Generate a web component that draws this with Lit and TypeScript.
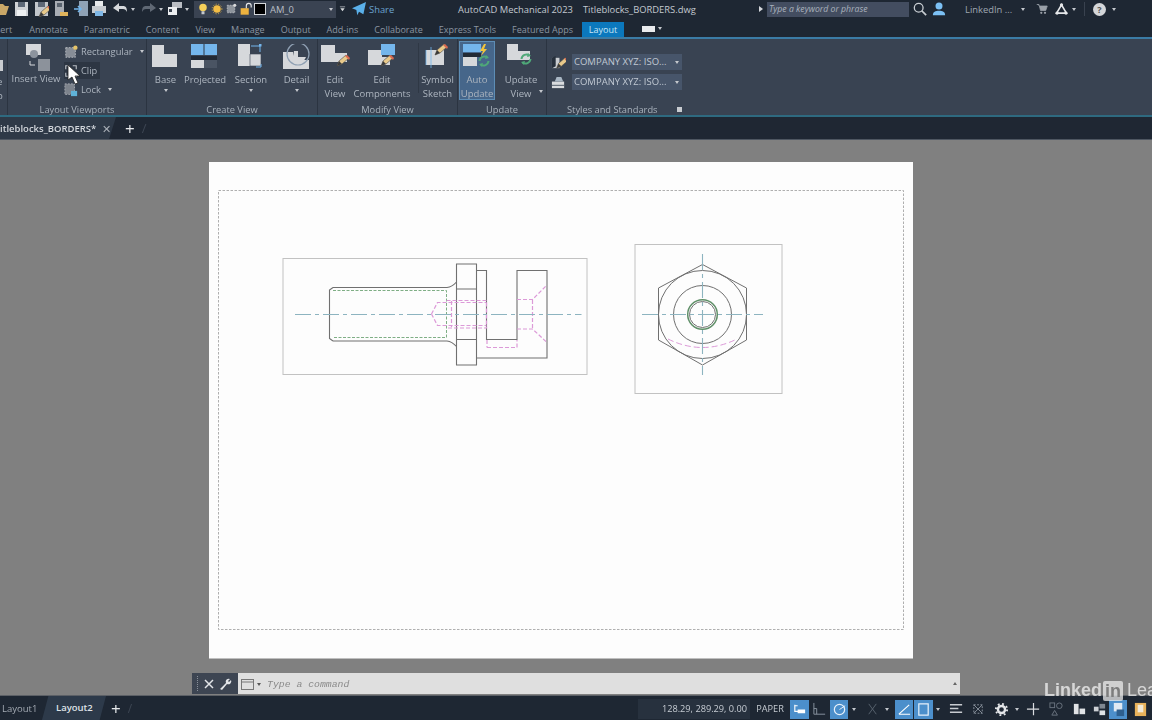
import { LitElement, css, html, svg, nothing } from "lit";
import { customElement } from "lit/decorators.js";

const GREY = "#d6d8db";
const BLUE = "#74b6ec";
const GREEN = "#4fa878";

const pencil = (x: number, y: number) => svg`
  <g transform="translate(${x} ${y})">
    <path d="M0 11l2-5 7-6 3 3-7 6z" fill="#e8c98a" stroke="#4a4a4a" stroke-width=".6" />
    <path d="M8 1l2-1 3 3-1 2z" fill="#d9694f" />
    <path d="M0 11l2-5 3 3z" fill="#3a3a3a" />
  </g>`;

const arrows = (x: number, y: number) => svg`
  <g transform="translate(${x} ${y})" fill="none" stroke="${GREEN}" stroke-width="2">
    <path d="M1.5 6a5 5 0 0 1 8-3.5" />
    <path d="M10.500 6a5 5 0 0 1-8 3.500" />
    <path d="M8 0l3 3-4 1z" fill="${GREEN}" stroke="none" />
    <path d="M4 12l-3-3 4-1z" fill="${GREEN}" stroke="none" />
  </g>`;

const lShape = svg`<path d="M1 1h12v9h13v13H1z" fill="${GREY}" />`;

const bigIcons: Record<string, unknown> = {
  base: lShape,
  projected: svg`
    <rect x="1" y="0" width="26" height="11" fill="${BLUE}" />
    <path d="M14 0v11" stroke="#2e3846" />
    <rect x="1" y="12" width="26" height="4" fill="#222a35" />
    <path d="M1 16h13v8H1z" fill="${GREY}" />
    <rect x="14" y="16" width="13" height="8" fill="#4a5463" />`,
  section: svg`
    <path d="M2 0h12v22H2z" fill="${GREY}" />
    <path d="M14 10h11v12H14z" fill="${GREY}" stroke="#3a4454" stroke-width=".6" />
    <path d="M15 2h9v6" fill="none" stroke="${BLUE}" stroke-width="1" />
    <rect x="23" y="0" width="2.500" height="2.500" fill="${BLUE}" />
    <path d="M20 23h5v-3" fill="none" stroke="${BLUE}" stroke-width="1" />`,
  detail: svg`
    <path d="M1 8h10v8h16v9H1z" fill="${GREY}" />
    <circle cx="16" cy="10" r="11" fill="none" stroke="#8fa0b3" stroke-width="1.200" />
    <path d="M12 7h4v6h8a9 9 0 0 1-14 4z" fill="${GREY}" />`,
  editView: svg`<path d="M1 1h14v8h12v9H1z" fill="${GREY}" />${pencil(17, 11)}`,
  editComponents: svg`
    <path d="M1 6h14v7h8v8H1z" fill="${GREY}" />
    <rect x="14" y="0" width="14" height="11" fill="${BLUE}" />${pencil(14, 11)}`,
  symbol: svg`
    <rect x="3" y="6" width="18" height="15" fill="${GREY}" />
    <path d="M8 3v21M3 6v15" stroke="${BLUE}" stroke-width=".8" />
    ${pencil(12, 0)}`,
  autoUpdate: svg`
    <rect x="1" y="0" width="18" height="8" fill="${BLUE}" />
    <rect x="1" y="9" width="18" height="4" fill="#222a35" />
    <rect x="1" y="13" width="14" height="9" fill="${GREY}" />
    <path d="M22 0l-4 7h3l-2 5 6-7h-3l2-5z" fill="#f2c53d" />
    ${arrows(16, 11)}`,
  updateView: svg`
    <path d="M1 0h11v7h12v9H1z" fill="${GREY}" />
    ${arrows(14, 9)}`,
};

const insertIcon = svg`
  <rect x="5" y="0" width="15" height="11" fill="${GREY}" />
  <circle cx="13" cy="10" r="4" fill="#8d949e" />
  <path d="M9 17v4h5" fill="none" stroke="${GREY}" />
  <rect x="17" y="15" width="12" height="12" fill="#8c929b" />`;

// small toolbar glyphs, 16 box
const tinyIcons: Record<string, unknown> = {
  save: svg`<rect x="2" y="1" width="13" height="14" fill="#cfd2d6" /><rect x="5" y="1" width="7" height="5" fill="#5d6877" /><rect x="4" y="9" width="9" height="6" fill="#eef0f2" />`,
  saveAs: svg`<rect x="2" y="1" width="13" height="14" fill="#c2c6cb" /><rect x="5" y="1" width="7" height="5" fill="#5d6877" />${pencil(6, 5)}`,
  cloud: svg`<rect x="3" y="0" width="9" height="15" fill="#a8adb4" /><rect x="5" y="2" width="5" height="4" fill="#59636f" /><path d="M8 11h8v4H8z" fill="#e0b45c" />`,
  publish: svg`<rect x="6" y="0" width="9" height="15" fill="#8fa2b6" /><path d="M1 8h7M5 5l3 3-3 3" stroke="${BLUE}" stroke-width="1.600" fill="none" />`,
  print: svg`<rect x="4" y="0" width="8" height="5" fill="#e7e9eb" /><rect x="1" y="5" width="14" height="7" fill="#c6cacf" /><rect x="4" y="10" width="8" height="5" fill="#7fb7e6" />`,
  undo: svg`<path d="M1 7l6-5v3h4c3 0 4 2 4 6-1-2-2-3-4-3H7v3z" fill="#d5d8db" />`,
  redo: svg`<path d="M15 7l-6-5v3H5C2 5 1 7 1 11c1-2 2-3 4-3h4v3z" fill="#5f6874" />`,
  workspace: svg`<rect x="5" y="1" width="10" height="6" fill="#b9bdc3" /><rect x="1" y="6" width="9" height="8" fill="#eceef0" /><rect x="2" y="8" width="3" height="3" fill="#39424f" />`,
  bulb: svg`<circle cx="8" cy="6" r="5" fill="#f4cf5a" /><rect x="6" y="11" width="4" height="4" fill="#c4c7cb" />`,
  sun: svg`<circle cx="8" cy="8" r="5" fill="#f3bd45" /><circle cx="8" cy="8" r="6.500" fill="none" stroke="#f3bd45" stroke-dasharray="1.500 2" />`,
  layerGrid: svg`<rect x="3" y="3" width="10" height="10" fill="#8e949c" stroke="#c3c6ca" stroke-dasharray="2 1.500" /><circle cx="13" cy="3" r="2" fill="#d9dadc" />`,
  lock: svg`<rect x="2" y="7" width="10" height="8" fill="#eeb33f" /><path d="M9 7V4a3 3 0 0 1 6 0v2" fill="none" stroke="#e8e8e8" stroke-width="1.400" />`,
  layerMore: svg`<path d="M2 3h12" stroke="#d5d8db" stroke-width="1.500" /><path d="M3 6h10l-5 7z" fill="#d5d8db" />`,
  share: svg`<path d="M0 7l16-7-3 14-5-3-2 4-1-6z" fill="#5ab0ea" />`,
  search: svg`<circle cx="6.500" cy="6.500" r="5" fill="none" stroke="#c8cdd2" stroke-width="1.500" /><path d="M10 10l5 5" stroke="#c8cdd2" stroke-width="2" />`,
  person: svg`<circle cx="8" cy="4.500" r="4" fill="#7cc0f4" /><path d="M1 15c0-4 3-5 7-5s7 1 7 5z" fill="#7cc0f4" />`,
  cart: svg`<path d="M1 2h3l2 8h7l2-6H5" fill="#9aa0a8" stroke="#9aa0a8" /><circle cx="7" cy="13" r="1.500" fill="#9aa0a8" /><circle cx="12" cy="13" r="1.500" fill="#9aa0a8" />`,
  tri: svg`<path d="M8 3L2 13h12z" fill="none" stroke="#e6e8ea" stroke-width="2" /><circle cx="8" cy="3" r="2" fill="#e6e8ea" /><circle cx="2.500" cy="13" r="2" fill="#e6e8ea" /><circle cx="13.500" cy="13" r="2" fill="#e6e8ea" />`,
  rectangular: svg`<rect x="2" y="3" width="11" height="11" fill="#878d96" stroke="#b9bdc2" stroke-dasharray="2 1.500" /><circle cx="13" cy="3" r="2.500" fill="#e6c468" />`,
  clip: svg`<path d="M2 6V2h4M10 2h4v4M2 10v4h4M10 14h4v-4" fill="none" stroke="#b8bdc3" stroke-width="1.300" />`,
  lockVp: svg`<rect x="1" y="1" width="11" height="12" fill="#7d838c" stroke="#a9adb3" stroke-dasharray="2 1.500" /><rect x="8" y="9" width="7" height="6" fill="#5fb2d8" />`,
  style1: svg`<rect x="1" y="3" width="8" height="11" fill="#c9ccd0" /><path d="M1 3l4-2v11l-4 2z" fill="#27303c" />${pencil(6, 3)}`,
  style2: svg`<rect x="1" y="7" width="13" height="7" fill="#d9dbde" /><path d="M4 7l2-5h5l2 5z" fill="#a9b7c4" /><path d="M1 11h13" stroke="#4b5564" />`,
};

// status bar glyphs
const statusIcons: Record<string, unknown> = {
  model: svg`<path d="M3 3v7h9M3 4h3" stroke="#fff" fill="none" stroke-width="1.200" /><rect x="6" y="8" width="8" height="4" fill="#fff" />`,
  ortho: svg`<path d="M2 1v12h12" stroke="#8b95a1" fill="none" /><path d="M2 7h3v6" stroke="#8b95a1" fill="none" />`,
  polar: svg`<circle cx="8" cy="8" r="5.500" fill="none" stroke="#e6f0fa" stroke-width="1.300" /><path d="M8 8l6-4" stroke="#e6f0fa" />`,
  snap: svg`<path d="M4 2l8 11M12 2L4 13" stroke="#59636f" />`,
  line: svg`<path d="M2 13L13 3M2 13h12" stroke="#fff" stroke-width="1.200" />`,
  box: svg`<rect x="3" y="2" width="10" height="12" fill="none" stroke="#e9f2fb" stroke-width="1.300" />`,
  lines: svg`<path d="M1 3h13M1 7h9M1 11h13" stroke="#c8ccd1" stroke-width="1.500" />`,
  select: svg`<rect x="3" y="3" width="9" height="9" fill="none" stroke="#8a929d" stroke-dasharray="2 1.500" /><path d="M3 3l9 9M12 3l-9 9" stroke="#8a929d" />`,
  gear: svg`<circle cx="8" cy="8" r="3.800" fill="none" stroke="#e3e5e8" stroke-width="2.600" /><circle cx="8" cy="8" r="6" fill="none" stroke="#e3e5e8" stroke-width="2" stroke-dasharray="2 2.700" />`,
  plus: svg`<path d="M8 1v13M1 7.500h13" stroke="#d9dcdf" stroke-width="1.300" />`,
  shapes: svg`<rect x="1" y="1" width="5" height="5" fill="none" stroke="#6b7480" /><circle cx="11" cy="4" r="3" fill="none" stroke="#6b7480" /><path d="M3 14l3-5 3 5z" fill="none" stroke="#6b7480" />`,
  blocks: svg`<rect x="2" y="2" width="5" height="11" fill="#e0e2e5" /><rect x="8" y="7" width="6" height="6" fill="#e0e2e5" />`,
  blocks2: svg`<rect x="2" y="5" width="5" height="5" fill="#cdd0d4" /><rect x="8" y="2" width="6" height="5" fill="#7f8791" /><rect x="8" y="9" width="6" height="5" fill="#e0e2e5" />`,
  lockB: svg`<rect x="3" y="1" width="9" height="9" fill="#dfe9f3" /><rect x="6" y="8" width="8" height="7" fill="#2e5f8e" />`,
  book: svg`<rect x="2" y="1" width="12" height="14" fill="#e8b25a" /><rect x="5" y="3" width="6" height="8" fill="#f2ead8" />`,
};

const statusItems: [string, number, boolean][] = [
  ["model", 19, true], ["sp", 3, false], ["ortho", 15, false], ["sp", 3, false], ["polar", 18, true],
  ["dot", 12, false], ["sp", 4, false], ["snap", 16, false], ["dot", 14, false], ["sp", 1, false], ["line", 18, true],
  ["sp", 1, false], ["box", 19, true], ["dot", 10, false], ["sp", 4, false], ["lines", 18, false], ["sp", 6, false],
  ["select", 15, false], ["sp", 8, false], ["gear", 15, false], ["dot", 16, false], ["sp", 1, false], ["plus", 15, false],
  ["sp", 7, false], ["shapes", 16, false], ["sp", 8, false], ["blocks", 14, false], ["sp", 6, false],
  ["blocks2", 14, false], ["sp", 3, false], ["lockB", 18, true], ["sp", 5, false], ["book", 16, false],
];

const ribbonTabs = ["Annotate", "Parametric", "Content", "View", "Manage", "Output", "Add-ins", "Collaborate", "Express Tools", "Featured Apps"];

type Big = { key: string; label: string[]; w: number; caret?: boolean; active?: boolean; side?: boolean };

const createView: Big[] = [
  { key: "base", label: ["Base"], w: 37, caret: true },
  { key: "projected", label: ["Projected"], w: 42 },
  { key: "section", label: ["Section"], w: 50, caret: true },
  { key: "detail", label: ["Detail"], w: 41, caret: true },
];
const modifyView: Big[] = [
  { key: "editView", label: ["Edit", "View"], w: 34 },
  { key: "editComponents", label: ["Edit", "Components"], w: 60 },
];

@customElement("app-root")
export class AppRoot extends LitElement {
  static styles = css`
    :host {
      display: block;
      width: 1152px;
      height: 720px;
      overflow: hidden;
      position: relative;
      font-family: "Open Sans", "Liberation Sans", sans-serif;
      background: #808080;
    }
    .app {
      width: 1152px;
      height: 720px;
      display: flex;
      flex-direction: column;
      filter: blur(0.35px);
    }
    svg { display: block; flex: none; }

    .titlebar {
      height: 20px;
      padding-bottom: 2px;
      box-sizing: border-box;
      background: #1e2733;
      display: flex;
      align-items: center;
      flex: none;
      position: relative;
      color: #c6ccd3;
      font-size: 9.400px;
    }
    .sp { flex: none; }
    .dot {
      flex: none;
      width: 0;
      height: 0;
      border-left: 2px solid transparent;
      border-right: 2px solid transparent;
      border-top: 3px solid #c4c8cd;
    }
    .layerbar {
      flex: none;
      width: 142px;
      height: 17px;
      background: #3a4352;
      display: flex;
      align-items: center;
      gap: 2px;
      padding-left: 3px;
      box-sizing: border-box;
      margin-left: 5px;
    }
    .swatch { width: 12px; height: 12px; background: #000; border: 1px solid #d5d8db; box-sizing: border-box; }
    .layername { color: #b9bfc7; flex: 1; margin-left: 2px; }
    .caretbox { margin-right: 3px; }
    .share { color: #6aa3cf; margin-left: 3px; width: 89px; }
    .apptitle { color: #c3c9d0; white-space: nowrap; width: 301px; display: flex; gap: 10px; }
    .arrowr { width: 0; height: 0; border-top: 3px solid transparent; border-bottom: 3px solid transparent; border-left: 4px solid #d4d7db; flex: none; margin-right: 4px; }
    .search {
      flex: none;
      width: 142px;
      height: 15px;
      background: #434d60;
      color: #aab2bd;
      font-style: italic;
      font-size: 8.700px;
      line-height: 15px;
      padding-left: 2px;
      box-sizing: border-box;
      margin-right: 4px;
    }
    .user { color: #9ea6b0; width: 50px; margin-left: 19px; white-space: nowrap; }
    .vsep { width: 1px; height: 14px; background: #39424f; margin: 0 8px; flex: none; }
    .help {
      width: 13px;
      height: 13px;
      border-radius: 50%;
      background: #d4d6d9;
      color: #555;
      font-size: 9px;
      font-weight: 700;
      text-align: center;
      line-height: 13px;
      flex: none;
      margin-right: 6px;
    }

    .tabs {
      height: 19px;
      box-sizing: border-box;
      background: #1e2733;
      flex: none;
      display: flex;
      align-items: stretch;
      font-size: 9px;
      color: #8b95a1;
      border-bottom: 2px solid #3b7ca6;
      line-height: 20px;
      overflow: hidden;
      white-space: nowrap;
    }
    .tab { margin-right: 16px; }
    .tab.cut { margin-left: -4px; margin-right: 17px; }
    .tab.active {
      background: #0b78bd;
      color: #c9e6f7;
      width: 42px;
      margin: 2px 18px 0 -7px;
      line-height: 16px;
      text-align: center;
    }
    .wsicon { width: 13px; height: 6px; background: #e9ebee; align-self: center; margin-right: 3px; }

    .ribbon {
      height: 78px;
      box-sizing: border-box;
      background: #394352;
      flex: none;
      display: flex;
      border-bottom: 2px solid #2e6a80;
      color: #adb5bf;
      font-size: 9.500px;
    }
    .panel {
      flex: none;
      display: flex;
      flex-direction: column;
      border-right: 1px solid #2b3441;
      box-sizing: border-box;
      position: relative;
    }
    .panel .body { flex: 1; display: flex; min-height: 0; align-items: flex-start; }
    .panel .title {
      height: 12px;
      line-height: 14px;
      text-align: center;
      color: #a9b2bc;
      font-size: 9.300px;
      white-space: nowrap;
    }
    .p0 { width: 8px; overflow: hidden; }
    .p0 .body { flex-direction: column; }
    .stub { width: 3px; height: 11px; background: #c9ccd0; margin-top: 21px; }
    .frag { margin: 5px 0 0 -3px; line-height: 12px; }
    .p1 { width: 139px; }
    .p2 { width: 171px; }
    .p3 { width: 140px; }
    .p4 { width: 89px; }
    .p5 { width: 144px; border-right: none; }

    .big {
      flex: none;
      display: flex;
      flex-direction: column;
      align-items: center;
      box-sizing: border-box;
      padding-top: 5px;
      line-height: 13px;
      text-align: center;
      white-space: nowrap;
      position: relative;
    }
    .big svg { margin-bottom: 4px; }
    .big.two { line-height: 14px; }
    .big.two svg { margin-bottom: 4px; }
    .big.active {
      background: #46668a;
      border: 1px solid #5d8db5;
      height: 59px;
      margin-top: 2px;
      padding-top: 2px;
      margin-left: 1px;
    }
    .caret { margin-top: 3px; }
    .sidecaret { position: absolute; right: 0; bottom: 8px; }
    .sepline { width: 1px; height: 50px; margin: 4px 0 0 6px; background: #2f3845; flex: none; }

    .insert { width: 56px; margin-left: 0; }
    .insert svg { margin-bottom: 0; margin-top: 0; }
    .smalls { display: flex; flex-direction: column; align-items: flex-start; padding-top: 4px; gap: 2px; }
    .small {
      height: 17px;
      display: flex;
      align-items: center;
      gap: 3px;
      padding-right: 2px;
      white-space: nowrap;
      font-size: 9.300px;
    }
    .small.hot { background: #2d3643; padding-right: 3px; }
    .small .dot { margin-left: 4px; }

    .combos { display: grid; grid-template-columns: 15px 110px; gap: 4px 6px; padding: 15px 0 0 4px; align-items: center; align-content: start; }
    .combo {
      height: 16px;
      background: #47556a;
      color: #c0c8d2;
      font-size: 9.500px;
      line-height: 16px;
      padding-left: 2px;
      display: flex;
      justify-content: space-between;
      align-items: center;
      padding-right: 3px;
      box-sizing: border-box;
      white-space: nowrap;
    }
    .expander { position: absolute; right: 9px; bottom: 3px; width: 5px; height: 5px; background: #c8ccd1; }
    .p5 .title { text-align: left; padding-left: 20px; }

    .doctabs {
      height: 23px;
      flex: none;
      background: #1f2733;
      display: flex;
      align-items: center;
      color: #d3d7dc;
      font-size: 9.500px;
      border-bottom: 1px solid #4e5661;
      box-sizing: border-box;
    }
    .doctab {
      width: 116px;
      height: 22px;
      background: #2e3947;
      clip-path: polygon(0 0, 100% 0, 94% 100%, 0 100%);
      display: flex;
      align-items: center;
      font-weight: 600;
      white-space: nowrap;
      overflow: hidden;
    }
    .doctab span:first-child { width: 102px; }
    .close { color: #aab0b8; font-size: 11px; font-weight: 400; }
    .plusbtn { color: #e8eaec; font-size: 17px; font-weight: 400; margin-left: 9px; line-height: 1; }
    .slash { color: #3d4653; font-size: 13px; margin-left: 7px; }

    .canvas { flex: 1; background: #808080; position: relative; border-bottom: 1px solid #5c6066; }
    .drawing { position: absolute; left: 0; top: 0; }

    .cmd {
      position: absolute;
      left: 192px;
      top: 533px;
      width: 768px;
      height: 21px;
      display: flex;
      background: #3d4552;
    }
    .cmdtools { width: 46px; flex: none; display: flex; align-items: center; gap: 5px; padding-left: 5px; box-sizing: border-box; }
    .grip { width: 1px; height: 15px; border-left: 1px dotted #8a9099; }
    .cmdinput {
      flex: 1;
      background: #dfdfdf;
      display: flex;
      align-items: center;
      font-family: "Liberation Mono", monospace;
      font-style: italic;
      font-size: 9.800px;
      color: #8a8a8a;
      padding: 2px 0 0 3px;
      gap: 3px;
      position: relative;
    }
    .uparrow { position: absolute; right: 3px; top: 9px; width: 0; height: 0; border-left: 2.500px solid transparent; border-right: 2.500px solid transparent; border-bottom: 3px solid #666; }

    .status {
      height: 24px;
      flex: none;
      background: #1e2733;
      display: flex;
      align-items: center;
      color: #bcc2c9;
      font-size: 9.500px;
    }
    .ltab { padding-left: 2px; width: 40px; color: #a3aab3; flex: none; }
    .ltab.on {
      width: 64px;
      height: 24px;
      line-height: 24px;
      padding-left: 14px;
      box-sizing: border-box;
      background: #2d3a4a;
      color: #dfe3e7;
      font-weight: 600;
      clip-path: polygon(10% 0, 100% 0, 90% 100%, 0 100%);
      margin-left: 0;
    }
    .lplus { color: #e8eaec; font-size: 17px; margin-left: 5px; line-height: 1; flex: none; }
    .lslash { color: #3d4653; margin-left: 7px; font-size: 12px; }
    .stretch { flex: 1; }
    .coords {
      width: 112px;
      height: 20px;
      margin-top: 2px;
      background: #27313e;
      color: #c6ccd3;
      line-height: 20px;
      text-align: right;
      padding-right: 3px;
      box-sizing: border-box;
      flex: none;
      font-size: 9.200px;
    }
    .paper { width: 40px; text-align: center; flex: none; height: 20px; margin-top: 2px; line-height: 20px; font-size: 9.200px; color: #c4cad0; }
    .sicon { flex: none; height: 19px; margin-top: 2px; display: flex; align-items: center; justify-content: center; }
    .sicon.on { background: #4c8fcb; }

    .watermark {
      position: absolute;
      left: 1044px;
      top: 680px;
      display: flex;
      align-items: center;
      font-family: "Liberation Sans", sans-serif;
      font-size: 18px;
      color: rgba(235, 235, 235, 0.8);
      white-space: nowrap;
    }
    .watermark b { font-weight: 700; }
    .inbox {
      background: rgba(235, 235, 235, 0.75);
      color: #7d7d7d;
      font-weight: 700;
      padding: 0 2px;
      margin: 0 4px 0 1px;
      border-radius: 2px;
      line-height: 20px;
    }
    .cursor { position: absolute; left: 67px; top: 64px; }
  `;

  private tiny(key: string, w = 16, h = 16) {
    return html`<svg width=${w} height=${h} viewBox="0 0 16 16">${tinyIcons[key]}</svg>`;
  }

  private gap(w: number) {
    return html`<span class="sp" style="width:${w}px"></span>`;
  }

  private renderTitle() {
    return html`<div class="titlebar">
      <svg width="9" height="14" viewBox="0 0 9 14"><path d="M-3 2h6l2 2h4L6 13H-3z" fill="#c9a767" /></svg>
      ${this.gap(4)}${this.tiny("save")}${this.gap(4)}${this.tiny("saveAs")}${this.gap(3)}
      ${this.tiny("cloud")}${this.gap(5)}${this.tiny("publish")}${this.gap(2)}${this.tiny("print")}${this.gap(5)}
      ${this.tiny("undo")}${this.gap(3)}<span class="dot"></span>${this.gap(6)}${this.tiny("redo")}${this.gap(2)}
      <span class="dot"></span>${this.gap(4)}${this.tiny("workspace")}${this.gap(2)}<span class="dot"></span>
      <div class="layerbar">
        ${this.tiny("bulb", 12, 14)}${this.tiny("sun", 12, 14)}${this.tiny("layerGrid", 12, 14)}${this.tiny("lock", 13, 14)}
        <span class="swatch"></span><span class="layername">AM_0</span>
        <span class="dot caretbox"></span>
      </div>
      ${this.gap(3)}${this.tiny("layerMore", 7, 8)}${this.gap(6)}${this.tiny("share", 14, 14)}
      <span class="share">Share</span>
      <div class="apptitle"><span>AutoCAD Mechanical 2023</span><span>Titleblocks_BORDERS.dwg</span></div>
      <span class="arrowr"></span>
      <div class="search">Type a keyword or phrase</div>
      ${this.tiny("search", 14, 14)}${this.gap(5)}${this.tiny("person", 14, 14)}
      <span class="user">LinkedIn ...</span>${this.gap(6)}<span class="dot"></span>${this.gap(11)}
      ${this.tiny("cart", 12, 14)}${this.gap(7)}${this.tiny("tri", 13, 14)}${this.gap(4)}<span class="dot"></span>
      <span class="vsep"></span><span class="help">?</span><span class="dot"></span>
    </div>`;
  }

  private renderTabs() {
    return html`<div class="tabs">
      <span class="tab cut">sert</span>
      ${ribbonTabs.map((t) => html`<span class="tab">${t}</span>`)}
      <span class="tab active">Layout</span>
      <span class="wsicon"></span><span class="dot" style="align-self:center"></span>
    </div>`;
  }

  private big(b: Big) {
    return html`<div class="big ${b.label.length > 1 ? "two" : ""} ${b.active ? "active" : ""}" style="width:${b.w}px">
      <svg width="30" height="25" viewBox="0 0 30 25">${bigIcons[b.key]}</svg>
      ${b.label.map((l) => html`<span>${l}</span>`)}
      ${b.caret ? html`<span class="dot caret"></span>` : nothing}
      ${b.side ? html`<span class="dot sidecaret"></span>` : nothing}
    </div>`;
  }

  private renderRibbon() {
    return html`<div class="ribbon">
      <div class="panel p0">
        <div class="body"><span class="stub"></span><span class="frag">e</span><span class="frag" style="margin-top:2px">p</span></div>
      </div>
      <div class="panel p1">
        <div class="body">
          <div class="big insert">
            <svg width="30" height="28" viewBox="0 0 30 28">${insertIcon}</svg>
            <span>Insert View</span>
          </div>
          <div class="smalls">
            <div class="small">${this.tiny("rectangular", 14, 14)}Rectangular<span class="dot"></span></div>
            <div class="small hot">${this.tiny("clip", 14, 14)}Clip</div>
            <div class="small">${this.tiny("lockVp", 14, 14)}Lock<span class="dot"></span></div>
          </div>
        </div>
        <div class="title">Layout Viewports</div>
      </div>
      <div class="panel p2">
        <div class="body">${createView.map((b) => this.big(b))}</div>
        <div class="title">Create View</div>
      </div>
      <div class="panel p3">
        <div class="body">
          ${modifyView.map((b) => this.big(b))}
          <span class="sepline"></span>
          ${this.big({ key: "symbol", label: ["Symbol", "Sketch"], w: 37 })}
        </div>
        <div class="title">Modify View</div>
      </div>
      <div class="panel p4">
        <div class="body">
          ${this.big({ key: "autoUpdate", label: ["Auto", "Update"], w: 36, active: true })}
          ${this.gap(4)}
          ${this.big({ key: "updateView", label: ["Update", "View"], w: 44, side: true })}
        </div>
        <div class="title">Update</div>
      </div>
      <div class="panel p5">
        <div class="body">
          <div class="combos">
            ${this.tiny("style1", 15, 15)}<div class="combo">COMPANY XYZ: ISO...<span class="dot"></span></div>
            ${this.tiny("style2", 15, 15)}<div class="combo">COMPANY XYZ: ISO...<span class="dot"></span></div>
          </div>
        </div>
        <div class="title">Styles and Standards</div>
        <span class="expander"></span>
      </div>
    </div>`;
  }

  // paper and the two viewports; drawn in page coordinates (viewBox starts at y 140)
  private renderDrawing() {
    const ln = "#707070";
    const pink = "#dc9ad8";
    const grn = "#7fae85";
    const ctr = "#8db4c0";
    return html`<svg class="drawing" width="1152" height="556" viewBox="0 140 1152 556">
      <rect x="209" y="162" width="704" height="496.500" fill="#fdfdfd" />
      <rect x="218.500" y="190.500" width="685" height="439" fill="none" stroke="#9a9a9a" stroke-width=".8" stroke-dasharray="2.500 1.500" />
      <rect x="283" y="258.500" width="304" height="116" fill="none" stroke="#c2c2c2" />
      <rect x="635" y="244.500" width="147" height="149" fill="none" stroke="#c2c2c2" />

      <g fill="none" stroke=${ln} stroke-width="1.100">
        <path d="M333 287.500H447Q452 287 456.500 282M333 341H447Q452 341.500 456.500 346.500" />
        <path d="M333 287.500L329.500 290V338.500L333 341" />
        <path d="M456.500 264H476.500V365H456.500ZM456.500 289H476.500M456.500 339.500H476.500" />
        <path d="M476.500 270.500H486.500V339.500H517V270.500H547V358H476.500" />
      </g>
      <g fill="none" stroke=${grn} stroke-width="1" stroke-dasharray="3 1.500">
        <path d="M333 290.500H446.500V337.500H333" />
      </g>
      <g fill="none" stroke=${pink} stroke-width="1.200" stroke-dasharray="4 2">
        <path d="M431.500 314L437.500 302.500H486.500M431.500 314L437.500 325.500H486.500" />
        <path d="M446.500 300.500H486.500V328H446.500M451.500 301V327" />
        <path d="M487 347.500H517V340M487 340V347.500" />
        <path d="M517 299.500H532.500L547 285M517 329H532.500L547 342.500M532.500 300V329" />
      </g>
      <path d="M295 314.500H581.500" stroke=${ctr} stroke-width="1.100" stroke-dasharray="16 4 4 4" fill="none" />

      <g fill="none" stroke=${ln} stroke-width="1">
        <path d="M702.500 264.500L746.500 288V340L702.500 365L658.500 340V288Z" />
        <circle cx="702.500" cy="314.500" r="44" />
        <circle cx="702.500" cy="314.500" r="29" />
        <circle cx="702.500" cy="314.500" r="13" />
      </g>
      <circle cx="702.500" cy="314.500" r="14.800" fill="none" stroke="#5f8f68" stroke-width="1.500" />
      <path d="M668 339Q702.500 356 737 339" fill="none" stroke=${pink} stroke-dasharray="6 3" />
      <path d="M642 314.500H763M702.500 254V375" fill="none" stroke=${ctr} stroke-width="1.100" stroke-dasharray="16 4 4 4" />
    </svg>`;
  }

  private renderCommand() {
    return html`<div class="cmd">
      <div class="cmdtools">
        <span class="grip"></span>
        <svg width="10" height="10" viewBox="0 0 10 10"><path d="M1 1l8 8M9 1L1 9" stroke="#e3e5e8" stroke-width="1.500" /></svg>
        <svg width="13" height="13" viewBox="0 0 13 13"><path d="M1 12l6-6a3 3 0 0 1 4-4L9 4l1 1 2-2a3 3 0 0 1-4 4l-5 6z" fill="#e3e5e8" /></svg>
      </div>
      <div class="cmdinput">
        <svg width="13" height="11" viewBox="0 0 13 11"><rect x=".5" y=".5" width="12" height="10" fill="none" stroke="#777" /><path d="M.5 3h12" stroke="#777" /></svg>
        <span class="dot" style="border-top-color:#555"></span>
        <span style="margin-left:3px">Type a command</span>
        <span class="uparrow"></span>
      </div>
    </div>`;
  }

  private renderStatus() {
    return html`<div class="status">
      <span class="ltab">Layout1</span>
      <span class="ltab on">Layout2</span>
      <span class="lplus">+</span>
      <span class="lslash">/</span>
      <span class="stretch"></span>
      <div class="coords">128.29, 289.29, 0.00</div>
      <span class="paper">PAPER</span>
      ${statusItems.map(([key, w, on]) => {
        if (key === "sp") return this.gap(w);
        if (key === "dot") return html`<span class="sicon" style="width:${w}px"><span class="dot"></span></span>`;
        return html`<span class="sicon ${on ? "on" : ""}" style="width:${w}px">
          <svg width="15" height="15" viewBox="0 0 16 16">${statusIcons[key]}</svg>
        </span>`;
      })}
      ${this.gap(4)}
    </div>`;
  }

  render() {
    return html`<div class="app">
      ${this.renderTitle()} ${this.renderTabs()} ${this.renderRibbon()}
      <div class="doctabs">
        <div class="doctab"><span>itleblocks_BORDERS*</span><span class="close">✕</span></div>
        <span class="plusbtn">+</span>
        <span class="slash">/</span>
      </div>
      <div class="canvas">${this.renderDrawing()} ${this.renderCommand()}</div>
      ${this.renderStatus()}
      <div class="watermark"><b>Linked</b><span class="inbox">in</span>Learning</div>
      <svg class="cursor" width="14" height="21" viewBox="0 0 14 21">
        <path d="M1 1v15l4-3 3 7 3-1-3-7h5z" fill="#fff" stroke="#222" stroke-width=".8" />
      </svg>
    </div>`;
  }
}
